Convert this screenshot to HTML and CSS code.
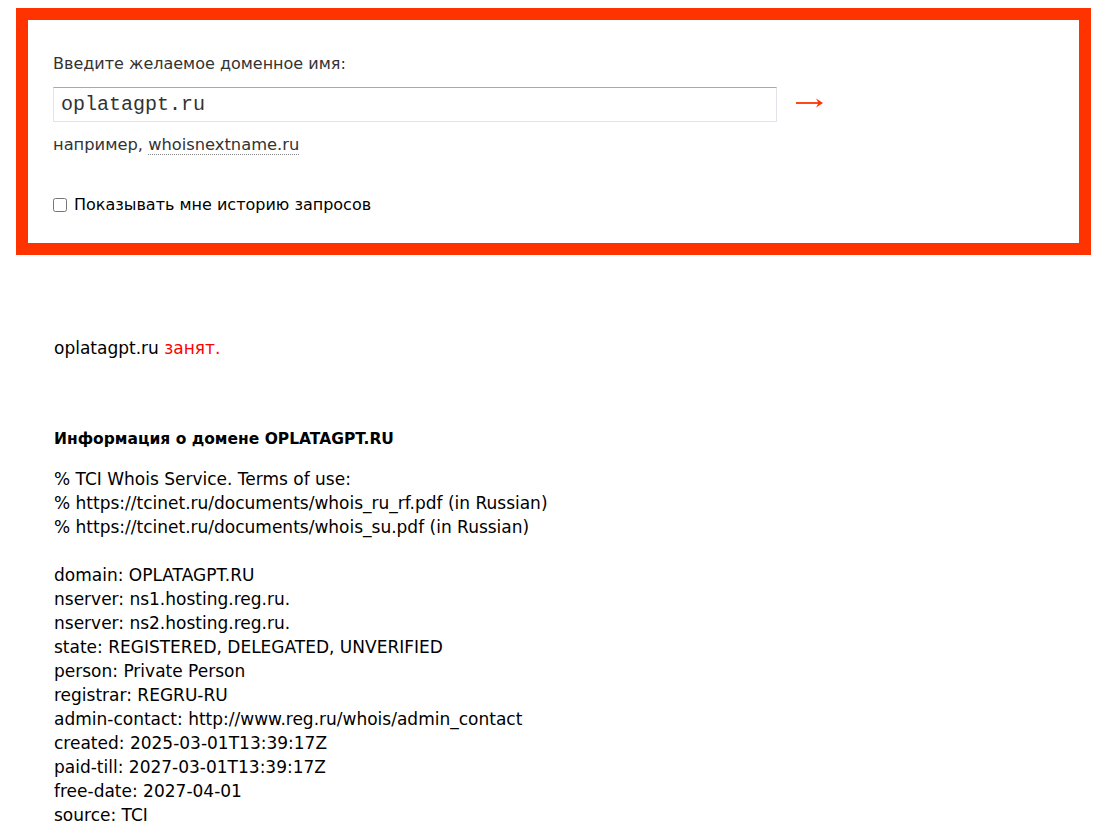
FILE: index.html
```html
<!DOCTYPE html>
<html lang="ru">
<head>
    <meta charset="UTF-8">
    <title>Whois: oplatagpt.ru</title>
    <link rel="stylesheet" href="styles.css">
</head>
<body>
    <form class="search-box">
        <div class="search-label">Введите желаемое доменное имя:</div>
        <div class="search-row">
            <input type="text" class="search-input" value="oplatagpt.ru">
            <button type="submit" class="search-go" aria-label="Проверить">
                <svg width="30" height="12" viewBox="0 0 30 12">
                    <path d="M1 6 H26" stroke="#ff3300" stroke-width="1.8" fill="none"/>
                    <path d="M21 1.5 L28 6 L21 10.5 L23.5 6 Z" fill="#ff3300"/>
                </svg>
            </button>
        </div>
        <div class="search-hint">например, <a href="#">whoisnextname.ru</a></div>
        <label class="history-check">
            <input type="checkbox"> Показывать мне историю запросов
        </label>
    </form>

    <div class="result">
        <div class="result-status">oplatagpt.ru <span class="busy">занят.</span></div>
        <h3 class="result-title">Информация о домене OPLATAGPT.RU</h3>
        <div class="whois-text">% TCI Whois Service. Terms of use:
% https://tcinet.ru/documents/whois_ru_rf.pdf (in Russian)
% https://tcinet.ru/documents/whois_su.pdf (in Russian)

domain: OPLATAGPT.RU
nserver: ns1.hosting.reg.ru.
nserver: ns2.hosting.reg.ru.
state: REGISTERED, DELEGATED, UNVERIFIED
person: Private Person
registrar: REGRU-RU
admin-contact: http://www.reg.ru/whois/admin_contact
created: 2025-03-01T13:39:17Z
paid-till: 2027-03-01T13:39:17Z
free-date: 2027-04-01
source: TCI</div>
    </div>
</body>
</html>
```
FILE: styles.css
```css
body {
    margin: 8px 6px 0 16px;
    font-family: "DejaVu Sans", Verdana, sans-serif;
    font-size: 16px;
    line-height: 24px;
    color: #000;
    background: #fff;
}
.search-box {
    border: 12px solid #ff3300;
    padding: 32px 26px 26px 25px;
    margin: 0;
}
.search-label {
    color: #333;
    margin-bottom: 11px;
}
.search-row {
    display: flex;
    align-items: center;
}
.search-input {
    box-sizing: border-box;
    width: 724px;
    height: 35px;
    margin: 0;
    padding: 0 7px;
    border: 1px solid #e2e2ea;
    border-top-color: #a9a9a9;
    font-family: "Liberation Mono", "Courier New", monospace;
    font-size: 20px;
    color: #333;
    outline: none;
}
.search-go {
    margin: 0 0 4px 18px;
    padding: 0;
    border: none;
    background: none;
    cursor: pointer;
    display: flex;
}
.search-hint {
    margin-top: 11px;
    color: #333;
    font-size: 16.3px;
}
.search-hint a {
    color: #333;
    text-decoration: none;
    border-bottom: 1px dotted #888;
}
.history-check {
    display: flex;
    align-items: center;
    margin-top: 36px;
    color: #000;
}
.history-check input {
    width: 14px;
    height: 14px;
    margin: 0 7px 0 0;
}
.result {
    padding-left: 38px;
    margin-top: 81px;
    font-size: 17px;
}
.busy {
    color: #ff0000;
}
.result-title {
    margin: 67px 0 16px;
    font-size: 15.5px;
    font-weight: bold;
}
.whois-text {
    white-space: pre-line;
}
```
